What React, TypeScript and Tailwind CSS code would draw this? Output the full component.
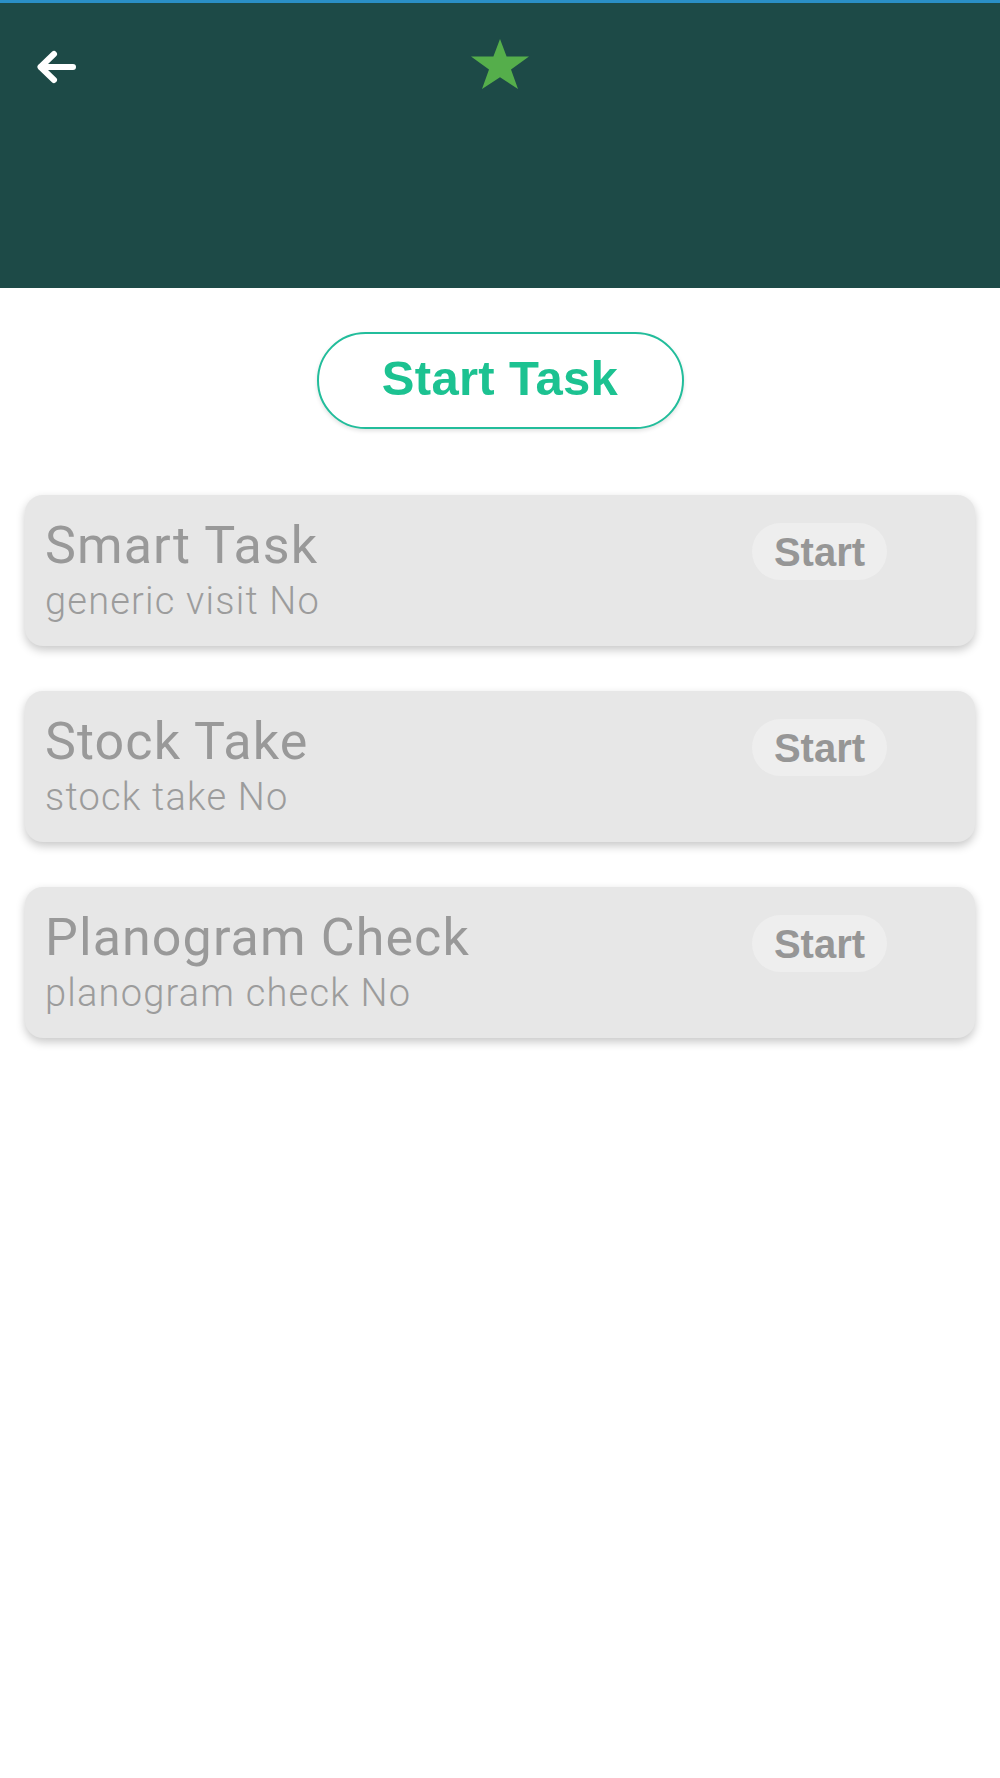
const tasks = [
  { title: 'Smart Task', sub: 'generic visit No' },
  { title: 'Stock Take', sub: 'stock take No' },
  { title: 'Planogram Check', sub: 'planogram check No' },
];

function BackArrow() {
  return (
    <svg width="42" height="36" viewBox="0 0 42 36" fill="none">
      <path d="M38 18H6" stroke="white" strokeWidth="6" strokeLinecap="round" />
      <path d="M19 5L5.5 18L19 31" stroke="white" strokeWidth="6" strokeLinecap="round" strokeLinejoin="round" />
    </svg>
  );
}

function Star() {
  return (
    <svg width="60" height="52" viewBox="0 0 60 52">
      <polygon
        points="30,1 36.6,18.6 59,18.6 41,31.6 48,51 30,39.3 12,51 19,31.6 1,18.6 23.4,18.6"
        fill="#55ae4b"
        strokeLinejoin="round"
      />
    </svg>
  );
}

function TaskCard({ title, sub }: { title: string; sub: string }) {
  return (
    <div className="flex h-[151px] justify-between rounded-[18px] bg-[#e7e7e7] pl-[20px] pr-[88px] shadow-[0_4px_10px_rgba(0,0,0,0.22)]">
      <div className="pt-[20px]">
        <div className="font-['Roboto'] text-[52px] leading-[62px] tracking-[1.1px] text-[#999999]">{title}</div>
        <div className="mt-[2px] font-['Roboto'] text-[38px] font-light leading-[45px] tracking-[1.2px] text-[#9c9c9c]">{sub}</div>
      </div>
      <div className="mt-[28px] flex h-[57px] w-[135px] items-center justify-center rounded-full bg-[#eeeeee] font-['Liberation_Sans'] text-[40px] font-bold text-[#969696]">
        Start
      </div>
    </div>
  );
}

export default function App() {
  return (
    <div className="min-h-[1778px] w-[1000px] bg-white">
      <div className="h-[3px] bg-[#2a8fc6]" />
      <div className="relative h-[285px] bg-[#1d4a47]">
        <div className="absolute left-[35px] top-[46px]">
          <BackArrow />
        </div>
        <div className="absolute left-[470px] top-[35px]">
          <Star />
        </div>
      </div>
      <div className="flex justify-center pt-[44px]">
        <div className="flex h-[97px] w-[367px] items-center justify-center rounded-full border-2 border-[#22bd9b] bg-white pb-[4px] font-['Liberation_Sans'] text-[49px] font-bold tracking-[0.3px] text-[#1cc291] shadow-[0_2px_4px_rgba(0,0,0,0.12)]">
          Start Task
        </div>
      </div>
      <div className="mt-[66px] flex flex-col gap-[45px] px-[25px]">
        {tasks.map((t) => (
          <TaskCard key={t.title} title={t.title} sub={t.sub} />
        ))}
      </div>
    </div>
  );
}
